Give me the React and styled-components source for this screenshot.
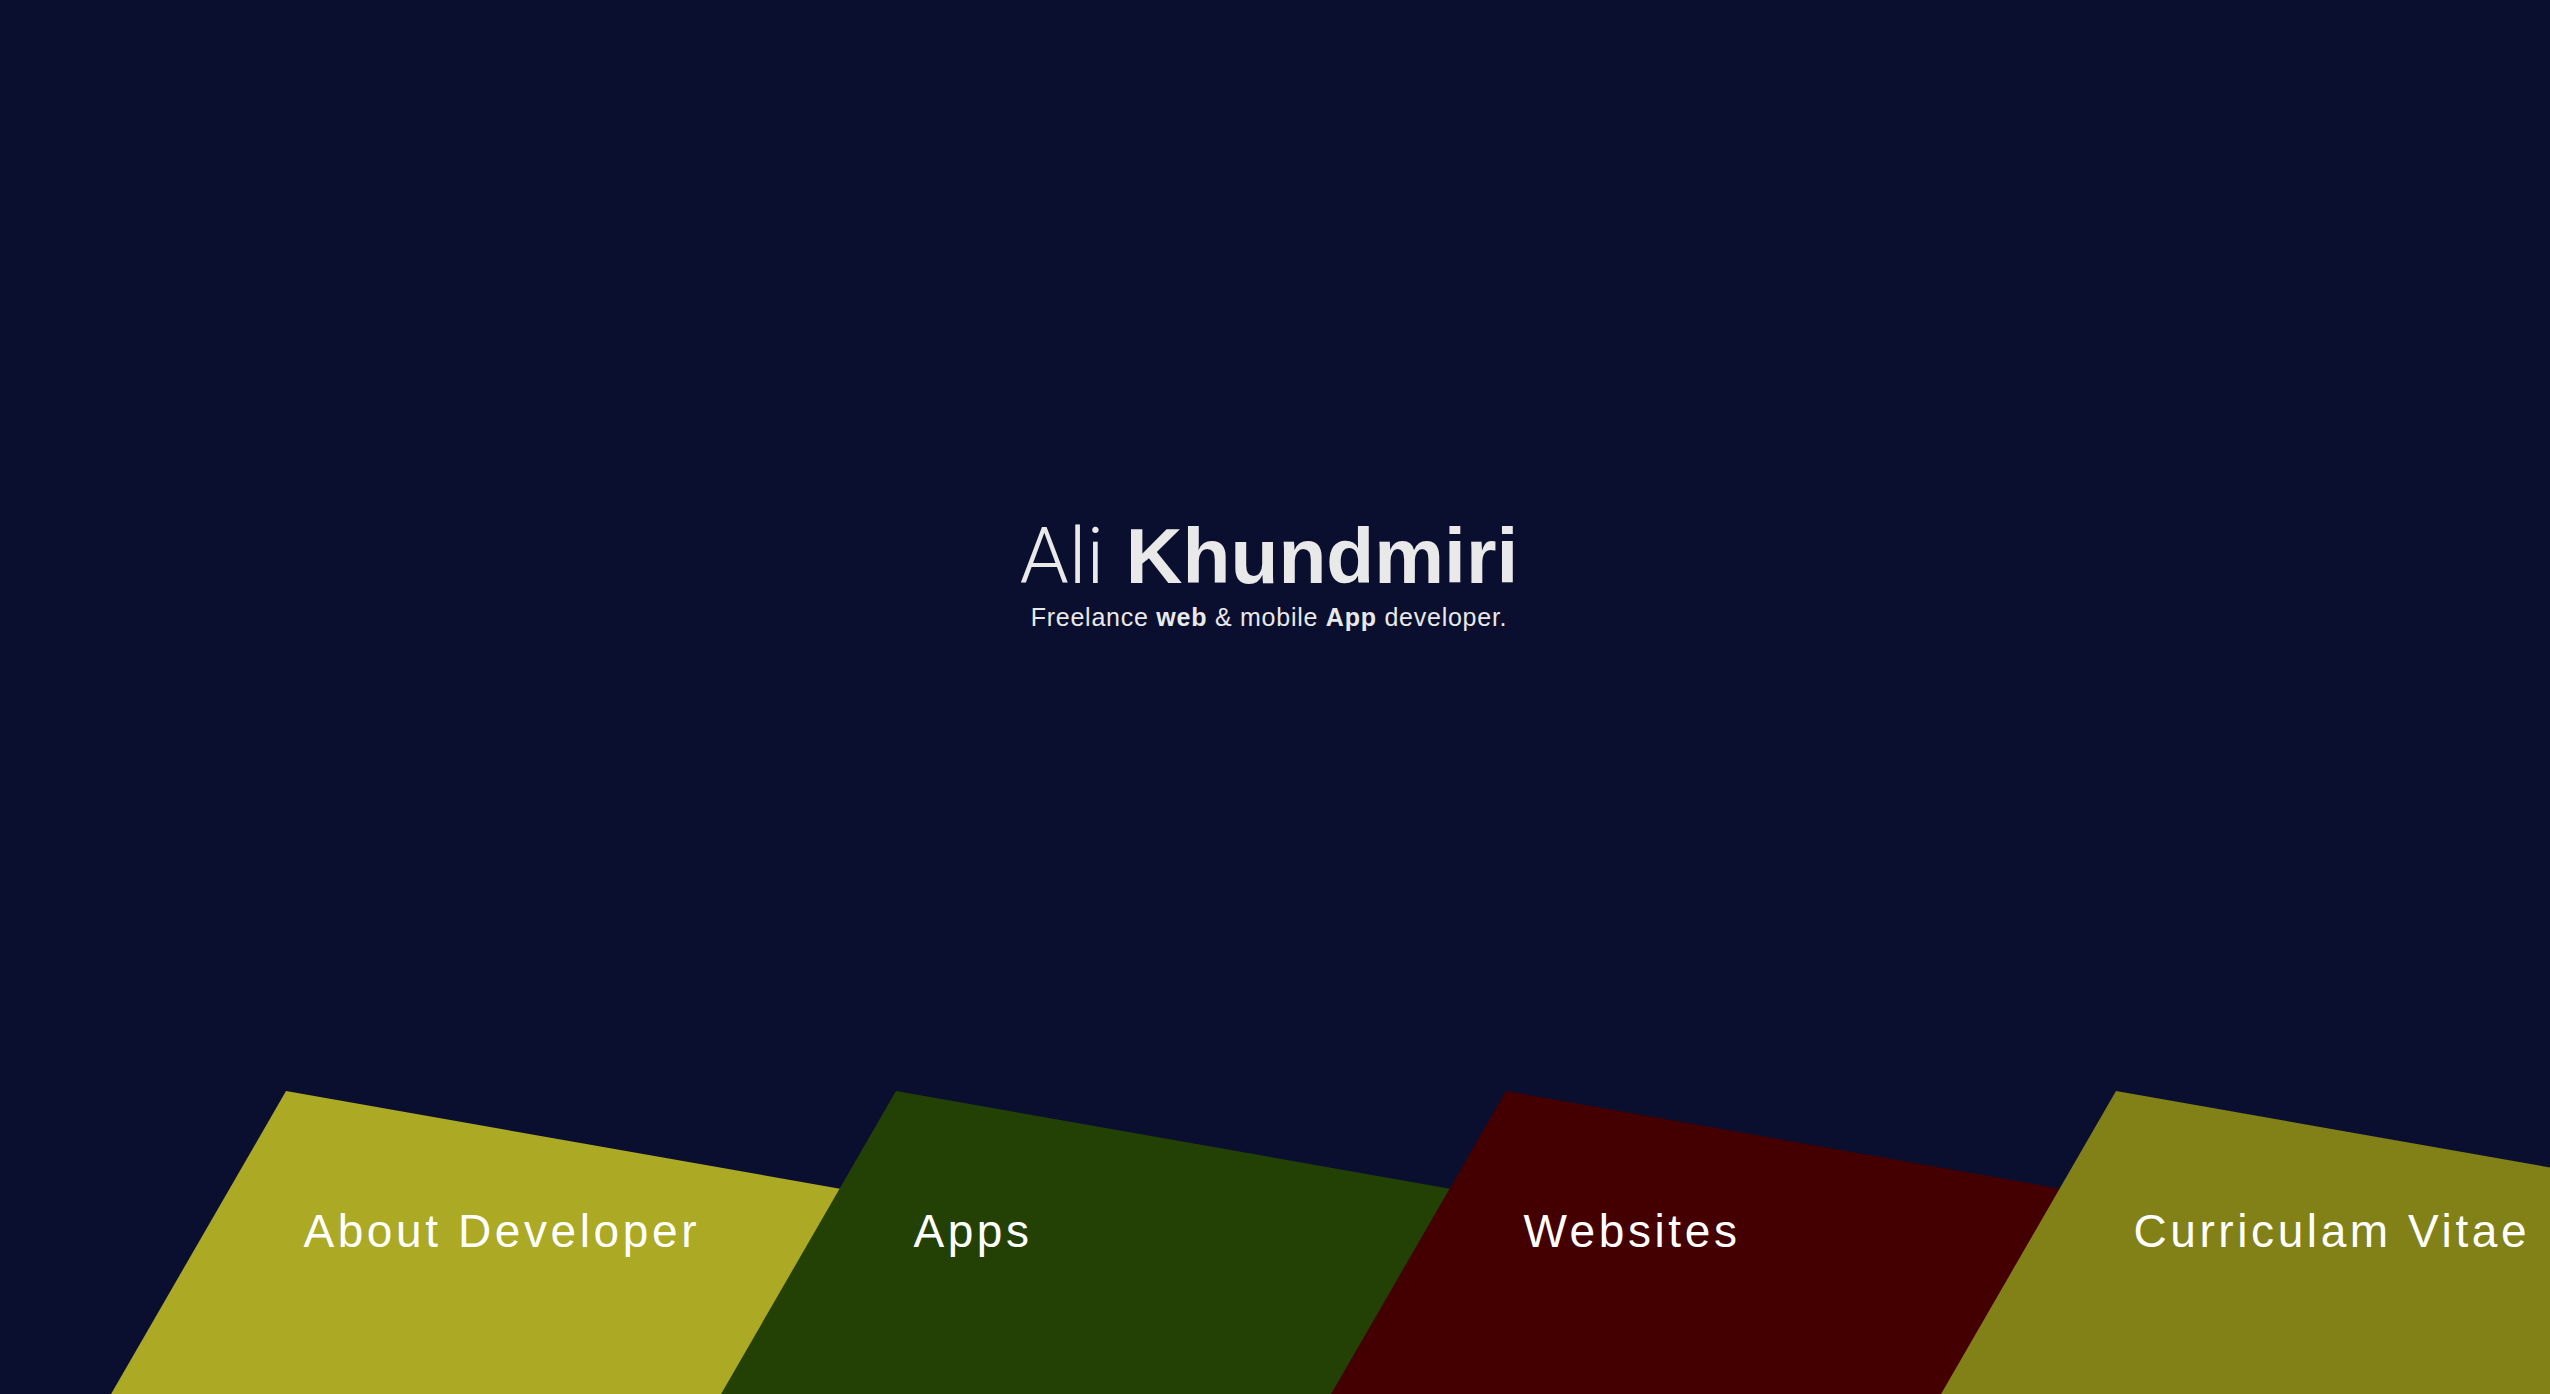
import React from "react";
import styled, { createGlobalStyle } from "styled-components";

const GlobalStyle = createGlobalStyle`
  html, body {
    margin: 0;
    padding: 0;
    background: #0b0f2f;
    overflow: hidden;
  }
  * {
    box-sizing: border-box;
  }
`;

function App() {
  const tiles = [
    { name: "About Developer", color: "#aca924" },
    { name: "Apps", color: "#234105" },
    { name: "Websites", color: "#440000" },
    { name: "Curriculam Vitae", color: "#828118" },
  ];

  return (
    <>
      <GlobalStyle />
      <Page>
        <Hero>
          <Title>
            <span className="light">Ali</span> <b>Khundmiri</b>
          </Title>
          <Subtitle>
            Freelance <b>web</b> &amp; mobile <b>App</b> developer.
          </Subtitle>
        </Hero>
        <TileRow>
          {tiles.map((item) => (
            <Tile key={item.name} color={item.color}>
              <TileLabel>{item.name}</TileLabel>
            </Tile>
          ))}
        </TileRow>
      </Page>
    </>
  );
}

const Page = styled.div`
  height: 100vh;
  display: flex;
  flex-direction: column;
  overflow: hidden;
  background: #0b0f2f;
  font-family: "Liberation Sans", Arial, sans-serif;
`;

const Hero = styled.div`
  flex: 1;
  display: flex;
  flex-direction: column;
  align-items: center;
  padding: 511px 12px 0 0;
  color: #e9e9e9;
`;

const Title = styled.h1`
  margin: 0;
  font-size: 78.5px;
  line-height: 91px;
  font-weight: 700;
  white-space: nowrap;

  .light {
    font-family: "Roboto", "Liberation Sans", sans-serif;
    font-weight: 300;
  }
`;

const Subtitle = styled.p`
  margin: 0;
  font-size: 25px;
  line-height: 30px;
  letter-spacing: 0.75px;
  white-space: nowrap;

  b {
    font-weight: 700;
  }
`;

const TileRow = styled.div`
  flex: 0 0 303px;
  height: 303px;
  min-height: 0;
  display: flex;
  align-items: flex-start;
  padding-left: 286px;
`;

const Tile = styled.div`
  flex: 0 0 610px;
  height: 700px;
  background: ${(p) => p.color};
  transform-origin: top left;
  transform: rotate(10deg) skewX(-20deg);
  padding: 108px 0 0 76px;
`;

const TileLabel = styled.div`
  transform-origin: top left;
  transform: skewX(20deg) rotate(-10deg);
  color: #ffffff;
  font-size: 46px;
  letter-spacing: 3.6px;
  white-space: nowrap;
`;

export default App;
